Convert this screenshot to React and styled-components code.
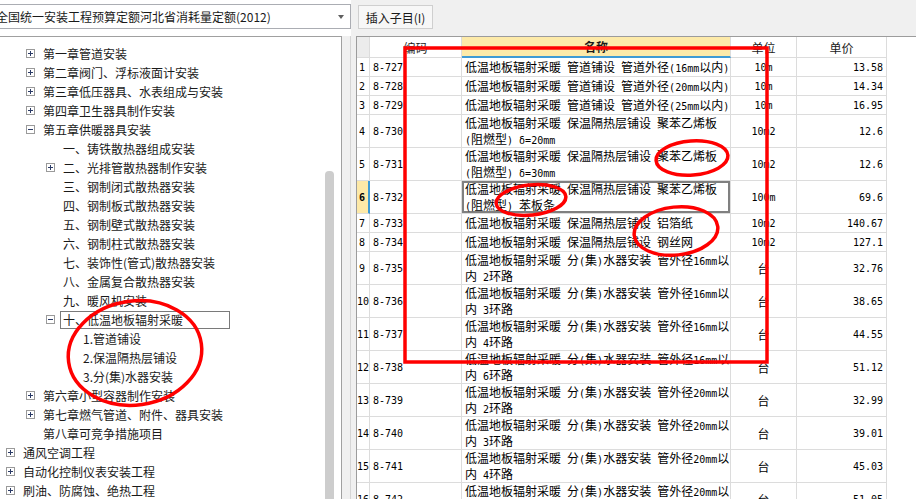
import React from 'react';
import styled, { createGlobalStyle } from 'styled-components';

const GlobalStyle = createGlobalStyle`
  html, body {
    margin: 0;
    padding: 0;
    background: #fff;
  }
  body {
    font-family: "Noto Sans CJK SC", "Noto Sans", sans-serif;
    font-size: 12px;
    color: #000;
  }
  * {
    box-sizing: border-box;
  }
`;

const tree = [
	{ level: 1, toggle: '+', text: '第一章管道安装' },
	{ level: 1, toggle: '+', text: '第二章阀门、浮标液面计安装' },
	{ level: 1, toggle: '+', text: '第三章低压器具、水表组成与安装' },
	{ level: 1, toggle: '+', text: '第四章卫生器具制作安装' },
	{ level: 1, toggle: '-', text: '第五章供暖器具安装' },
	{ level: 2, text: '一、铸铁散热器组成安装' },
	{ level: 2, toggle: '+', text: '二、光排管散热器制作安装' },
	{ level: 2, text: '三、钢制闭式散热器安装' },
	{ level: 2, text: '四、钢制板式散热器安装' },
	{ level: 2, text: '五、钢制壁式散热器安装' },
	{ level: 2, text: '六、钢制柱式散热器安装' },
	{ level: 2, text: '七、装饰性(管式)散热器安装' },
	{ level: 2, text: '八、金属复合散热器安装' },
	{ level: 2, text: '九、暖风机安装' },
	{ level: 2, toggle: '-', text: '十、低温地板辐射采暖', selected: true },
	{ level: 3, text: '1.管道铺设' },
	{ level: 3, text: '2.保温隔热层铺设' },
	{ level: 3, text: '3.分(集)水器安装' },
	{ level: 1, toggle: '+', text: '第六章小型容器制作安装' },
	{ level: 1, toggle: '+', text: '第七章燃气管道、附件、器具安装' },
	{ level: 1, text: '第八章可竞争措施项目' },
	{ level: 0, toggle: '+', text: '通风空调工程' },
	{ level: 0, toggle: '+', text: '自动化控制仪表安装工程' },
	{ level: 0, toggle: '+', text: '刷油、防腐蚀、绝热工程' },
];

const pipe = '低温地板辐射采暖 管道铺设 管道外径';
const layer = '低温地板辐射采暖 保温隔热层铺设 ';
const split = (d) => '低温地板辐射采暖 分(集)水器安装 管外径' + d + 'mm以';

const rows = [
	{ code: '8-727', name: [pipe + '(16mm以内)'], unit: '10m', price: '13.58' },
	{ code: '8-728', name: [pipe + '(20mm以内)'], unit: '10m', price: '14.34' },
	{ code: '8-729', name: [pipe + '(25mm以内)'], unit: '10m', price: '16.95' },
	{ code: '8-730', name: [layer + '聚苯乙烯板', '(阻燃型) δ=20mm'], unit: '10m2', price: '12.6' },
	{ code: '8-731', name: [layer + '聚苯乙烯板', '(阻燃型) δ=30mm'], unit: '10m2', price: '12.6' },
	{ code: '8-732', name: [layer + '聚苯乙烯板', '(阻燃型) 苯板条'], unit: '100m', price: '69.6', active: true },
	{ code: '8-733', name: [layer + '铝箔纸'], unit: '10m2', price: '140.67' },
	{ code: '8-734', name: [layer + '钢丝网'], unit: '10m2', price: '127.1' },
	{ code: '8-735', name: [split(16), '内 2环路'], unit: '台', price: '32.76' },
	{ code: '8-736', name: [split(16), '内 3环路'], unit: '台', price: '38.65' },
	{ code: '8-737', name: [split(16), '内 4环路'], unit: '台', price: '44.55' },
	{ code: '8-738', name: [split(16), '内 6环路'], unit: '台', price: '51.12' },
	{ code: '8-739', name: [split(20), '内 2环路'], unit: '台', price: '32.99' },
	{ code: '8-740', name: [split(20), '内 3环路'], unit: '台', price: '39.01' },
	{ code: '8-741', name: [split(20), '内 4环路'], unit: '台', price: '45.03' },
	{ code: '8-742', name: [split(20), '内 6环路'], unit: '台', price: '51.05' },
];

const Screen = styled.div`
	position: relative;
	display: flex;
	width: 916px;
	height: 499px;
	overflow: hidden;
	background: #fff;
`;

const LeftPane = styled.div`
	width: 351px;
	flex-shrink: 0;
	display: flex;
	flex-direction: column;
`;

const PickerBar = styled.div`
	height: 36px;
	padding-top: 4px;
`;

const Picker = styled.div`
	height: 25px;
	margin-left: -10px;
	padding: 0 5px 0 5px;
	border: 1px solid #abadb3;
	background: #fff;
	display: flex;
	align-items: center;
	justify-content: space-between;
	white-space: nowrap;
	font-size: 12px;
	color: #1a1a1a;
`;

const Caret = styled.span`
	width: 0;
	height: 0;
	border-left: 3.5px solid transparent;
	border-right: 3.5px solid transparent;
	border-top: 4px solid #606060;
	margin-right: 1px;
`;

const TreeArea = styled.div`
	flex: 1;
	display: flex;
	min-height: 0;
`;

const TreeBox = styled.div`
	width: 342px;
	display: flex;
	border-top: 1px solid #a0a0a0;
	border-right: 1px solid #a0a0a0;
	background: #fff;
	overflow: hidden;
`;

const TreeList = styled.ul`
	flex: 1;
	margin: 0;
	padding: 7px 0 0;
	list-style: none;
`;

const Node = styled.li`
	height: 19px;
	display: flex;
	align-items: center;
	padding-left: ${(p) => p.$level * 20 + 6}px;
	white-space: nowrap;
	color: #1a1a1a;
`;

const Toggle = styled.span`
	position: relative;
	flex-shrink: 0;
	width: 9px;
	height: 9px;
	margin-right: 8px;
	border: 1px solid ${(p) => (p.$kind ? '#9a9a9a' : 'transparent')};
	&::before {
		content: '';
		display: ${(p) => (p.$kind ? 'block' : 'none')};
		position: absolute;
		left: 1px;
		top: 3px;
		width: 5px;
		height: 1px;
		background: #2a3a66;
	}
	&::after {
		content: '';
		display: ${(p) => (p.$kind === '+' ? 'block' : 'none')};
		position: absolute;
		left: 3px;
		top: 1px;
		width: 1px;
		height: 5px;
		background: #2a3a66;
	}
`;

const Label = styled.span`
	line-height: 16px;
	${(p) =>
		p.$selected &&
		`
		width: 170px;
		height: 18px;
		margin-left: -3px;
		padding-left: 2px;
		border: 1px solid #7a7a7a;
	`}
`;

const ScrollTrack = styled.div`
	width: 19px;
	flex-shrink: 0;
	padding: 134px 0 0 3px;
`;

const ScrollThumb = styled.div`
	width: 9px;
	height: 400px;
	border-radius: 4px 4px 0 0;
	background: #cdcdcd;
`;

const Gutter = styled.div`
	width: 9px;
	background: #f0f0f0;
	border-right: 1px solid #d5d5d5;
`;

const RightPane = styled.div`
	flex: 1;
	display: flex;
	flex-direction: column;
	padding-left: 5px;
	background: #f0f0f0;
	min-width: 0;
`;

const Toolbar = styled.div`
	height: 36px;
	padding: 5px 0 0 2px;
`;

const ToolButton = styled.button`
	height: 24px;
	width: 75px;
	padding: 0;
	border: 1px solid #cfcfcf;
	background: #f7f7f7;
	font-family: "Noto Sans CJK SC", sans-serif;
	font-size: 12px;
	color: #1a1a1a;
`;

const Table = styled.div`
	flex: 1;
	background: #fff;
	border-top: 1px solid #9c9c9c;
	border-left: 1px solid #9c9c9c;
	overflow: hidden;
`;

const Row = styled.div`
	display: grid;
	grid-template-columns: 13px 92px 269px 66px 90px 1fr;
	height: ${(p) => p.$height}px;
`;

const HeadCell = styled.div`
	display: flex;
	align-items: center;
	justify-content: center;
	border-right: 1px solid #dcdcdc;
	border-bottom: ${(p) => (p.$current ? '2px solid #3f9bd4' : '1px solid #dcdcdc')};
	background: ${(p) => (p.$current ? '#fdeaa9' : p.$corner ? '#ececec' : '#fff')};
	font-weight: ${(p) => (p.$current ? 700 : 400)};
	color: #1a1a1a;
`;

const Cell = styled.div`
	display: flex;
	flex-direction: column;
	justify-content: center;
	align-items: ${(p) => p.$align || 'flex-start'};
	padding: 0 ${(p) => (p.$align === 'flex-end' ? 3 : 0)}px 0 ${(p) => (p.$align ? 0 : 3)}px;
	border-right: 1px solid #dcdcdc;
	border-bottom: 1px solid #dcdcdc;
	white-space: pre;
	overflow: hidden;
	color: #000;
`;

const NumCell = styled(Cell)`
	padding-left: ${(p) => (p.$wide ? 0 : 2)}px;
	overflow: visible;
	background: ${(p) => (p.$active ? '#fde9a8' : '#fff')};
	border-right: ${(p) => (p.$active ? '2px solid #3f9bd4' : '1px solid #dcdcdc')};
	font-weight: ${(p) => (p.$active ? 700 : 400)};
`;

const NameCell = styled(Cell)`
	box-shadow: ${(p) => (p.$focus ? 'inset 0 0 0 2px #808080' : 'none')};
`;

const Line = styled.div`
	line-height: 16px;
	height: 16px;
	white-space: pre;
`;

const Filler = styled.div`
	background: #fff;
`;

const Mono = styled.span`
	font-family: "DejaVu Sans Mono", "Liberation Mono", monospace;
	font-size: 10px;
	white-space: pre;
`;

const Marks = styled.svg`
	position: absolute;
	left: 0;
	top: 0;
	pointer-events: none;
`;

const ascii = /^[\x20-\x7eδ]+$/;
const mix = (s) =>
	String(s)
		.split(/([\x20-\x7eδ]+)/)
		.filter(Boolean)
		.map((part, i) => (ascii.test(part) ? <Mono key={i}>{part}</Mono> : part));

const App = () => {
	return (
		<>
			<GlobalStyle />
			<Screen>
				<LeftPane>
					<PickerBar>
						<Picker>
							<span>全国统一安装工程预算定额河北省消耗量定额(2012)</span>
							<Caret />
						</Picker>
					</PickerBar>
					<TreeArea>
						<TreeBox>
							<TreeList>
								{tree.map((item) => (
									<Node key={item.text} $level={item.level}>
										<Toggle $kind={item.toggle} />
										<Label $selected={item.selected}>{item.text}</Label>
									</Node>
								))}
							</TreeList>
							<ScrollTrack>
								<ScrollThumb />
							</ScrollTrack>
						</TreeBox>
						<Gutter />
					</TreeArea>
				</LeftPane>
				<RightPane>
					<Toolbar>
						<ToolButton>插入子目(I)</ToolButton>
					</Toolbar>
					<Table>
						<Row $height={21}>
							<HeadCell $corner />
							<HeadCell>编码</HeadCell>
							<HeadCell $current>名称</HeadCell>
							<HeadCell>单位</HeadCell>
							<HeadCell>单价</HeadCell>
							<Filler />
						</Row>
						{rows.map((r, i) => (
							<Row key={r.code} $height={r.name.length > 1 ? 33 : 19}>
								<NumCell $active={r.active} $wide={i + 1 > 9}>
									{mix(i + 1)}
								</NumCell>
								<Cell>{mix(r.code)}</Cell>
								<NameCell $focus={r.active}>
									{r.name.map((l) => (
										<Line key={l}>{mix(l)}</Line>
									))}
								</NameCell>
								<Cell $align="center">{mix(r.unit)}</Cell>
								<Cell $align="flex-end">{mix(r.price)}</Cell>
								<Filler />
							</Row>
						))}
					</Table>
				</RightPane>
				<Marks width="916" height="499" viewBox="0 0 916 499">
					<g fill="none" stroke="#ff0000" strokeWidth="3.5">
						<rect x="405" y="48" width="362" height="314" />
						<ellipse cx="135" cy="353" rx="67" ry="52" transform="rotate(-8 135 353)" />
						<ellipse cx="692" cy="158" rx="36" ry="17" transform="rotate(-4 692 158)" />
						<ellipse cx="531" cy="200" rx="35" ry="15" transform="rotate(-6 531 200)" />
						<ellipse cx="676" cy="231" rx="42" ry="24" transform="rotate(-6 676 231)" />
					</g>
				</Marks>
			</Screen>
		</>
	);
};

export default App;
